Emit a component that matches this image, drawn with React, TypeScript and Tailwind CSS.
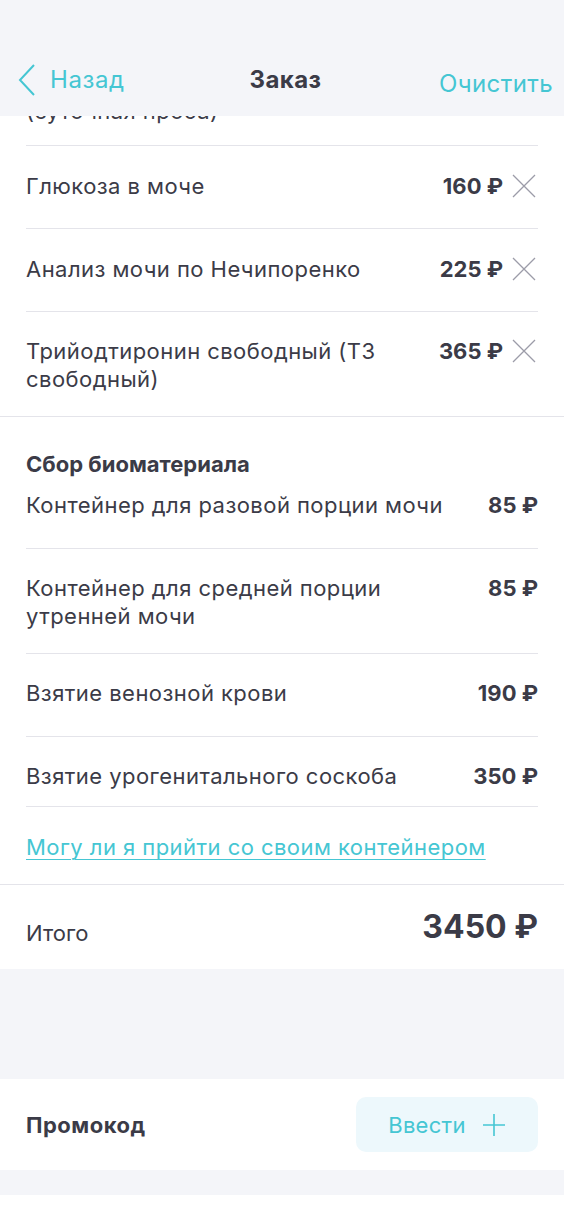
import React from 'react';

const font = { fontFamily: 'Inter, "Noto Sans", sans-serif' };

type Item = { name: string; price: number; cls: string };

const analyses: Item[] = [
  { name: 'Глюкоза в моче', price: 160, cls: 'pt-[26px] pb-[28px]' },
  { name: 'Анализ мочи по Нечипоренко', price: 225, cls: 'pt-[26px] pb-[28px]' },
  { name: 'Трийодтиронин свободный (Т3 свободный)', price: 365, cls: 'pt-[25px] pb-[23px]' },
];

const biomaterial: Item[] = [
  { name: 'Контейнер для разовой порции мочи', price: 85, cls: 'pt-0 pb-[29px]' },
  { name: 'Контейнер для средней порции утренней мочи', price: 85, cls: 'pt-[25px] pb-[23px]' },
  { name: 'Взятие венозной крови', price: 190, cls: 'pt-[25px] pb-[29px]' },
  { name: 'Взятие урогенитального соскоба', price: 350, cls: 'pt-[25px] pb-[16px]' },
];

const CloseIcon = () => (
  <svg width="24" height="24" viewBox="0 0 24 24" className="shrink-0 mt-[2px] mr-[2px]">
    <path d="M1 1 L23 23 M23 1 L1 23" stroke="#9c9ca8" strokeWidth="1.3" fill="none" />
  </svg>
);

const Row: React.FC<{ item: Item; removable?: boolean; first?: boolean }> = ({ item, removable, first }) => (
  <div className={`flex items-start justify-between ${first ? '' : 'border-t border-[#e4e4ea]'} ${item.cls}`}>
    <span className="flex-1 pr-[16px] text-[22px] leading-[28px] tracking-[0.45px] text-[#3b3b47]">{item.name}</span>
    <div className="flex items-start gap-[9px]">
      <span className="whitespace-nowrap text-[22px] leading-[28px] font-bold text-[#3b3b47]">{item.price} ₽</span>
      {removable && <CloseIcon />}
    </div>
  </div>
);

export default function App() {
  return (
    <div className="w-[564px] min-h-[1218px] bg-[#f4f5f9] overflow-hidden" style={font}>
      {/* header */}
      <div className="h-[116px] bg-[#f4f5f9] flex items-end pb-[20px] px-[18px]">
        <div className="flex-1 flex items-center gap-[14px] text-[#45c6d3]">
          <svg width="18" height="32" viewBox="0 0 18 32">
            <path d="M16 1 L2 16 L16 31" stroke="#45c6d3" strokeWidth="2" fill="none" />
          </svg>
          <span className="text-[24px] leading-[28px] tracking-[0.6px]">Назад</span>
        </div>
        <span className="text-[24px] leading-[28px] tracking-[0.4px] font-bold text-[#3b3b47] mb-[2px]">Заказ</span>
        <div className="flex-1 flex justify-end -mr-[7px]">
          <span className="text-[24px] leading-[28px] tracking-[0.4px] text-[#45c6d3] -mb-[2px]">Очистить</span>
        </div>
      </div>

      {/* analyses */}
      <div className="bg-white border-b border-[#e4e4ea]">
        <div className="h-[29px] overflow-hidden px-[26px]">
          <div className="-mt-[19px] text-[22px] leading-[28px] tracking-[0.45px] text-[#3b3b47]">(суточная проба)</div>
        </div>
        <div className="mx-[26px] border-t border-[#e4e4ea]">
          {analyses.map((it, i) => (
            <Row key={it.name} item={it} removable first={i === 0} />
          ))}
        </div>
      </div>

      {/* biomaterial */}
      <div className="bg-white border-b border-[#e4e4ea]">
        <div className="mx-[26px] pt-[33px]">
          <div className="text-[22px] leading-[28px] font-bold text-[#3b3b47] mb-[13px]">Сбор биоматериала</div>
          {biomaterial.map((it, i) => (
            <Row key={it.name} item={it} first={i === 0} />
          ))}
          <div className="border-t border-[#e4e4ea] pt-[26px] pb-[23px]">
            <a className="text-[22px] leading-[28px] tracking-[0.45px] text-[#45c6d3] underline underline-offset-[4px] decoration-1">
              Могу ли я прийти со своим контейнером
            </a>
          </div>
        </div>
      </div>

      {/* total */}
      <div className="bg-white h-[84px] px-[26px] flex items-center justify-between">
        <span className="text-[22px] leading-[28px] text-[#3b3b47] mt-[12px]">Итого</span>
        <span className="text-[32px] leading-[40px] font-bold text-[#3b3b47]">3450 ₽</span>
      </div>

      <div className="h-[110px]" />

      {/* promo */}
      <div className="bg-white h-[91px] px-[26px] flex items-center justify-between">
        <span className="text-[22px] leading-[28px] tracking-[0.5px] font-bold text-[#3b3b47]">Промокод</span>
        <button className="w-[182px] h-[55px] rounded-[10px] bg-[#edf8fc] flex items-center justify-center gap-[16px] text-[#45c6d3]">
          <span className="text-[22px] leading-[28px] tracking-[0.3px]">Ввести</span>
          <svg width="24" height="24" viewBox="0 0 24 24">
            <path d="M12 1 V23 M1 12 H23" stroke="#45c6d3" strokeWidth="1.6" fill="none" />
          </svg>
        </button>
      </div>

      <div className="h-[25px]" />
      <div className="bg-white h-[30px]" />
    </div>
  );
}
